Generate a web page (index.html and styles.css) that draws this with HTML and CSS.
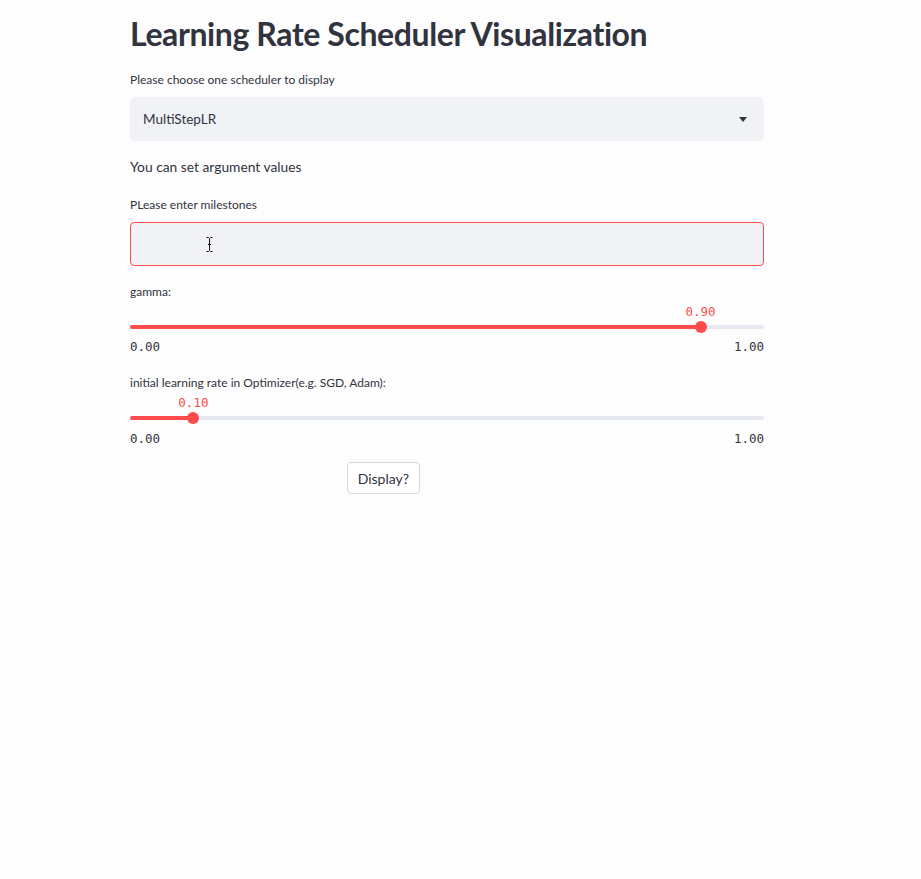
FILE: index.html
```html
<!DOCTYPE html>
<html lang="en">
<head>
<meta charset="utf-8">
<title>Learning Rate Scheduler Visualization</title>
<link rel="stylesheet" href="styles.css">
</head>
<body>
<main class="page">
  <h1 class="title">Learning Rate Scheduler Visualization</h1>

  <label class="label label-first">Please choose one scheduler to display</label>
  <div class="select">
    <span class="select-value">MultiStepLR</span>
    <svg class="caret" width="8" height="5" viewBox="0 0 8 5"><path d="M0 0H8L4 5Z" fill="#31333f"/></svg>
  </div>

  <p class="text">You can set argument values</p>

  <label class="label label-milestones">PLease enter milestones</label>
  <div class="input">
    <svg class="ibeam" width="7" height="15" viewBox="0 0 7 15"><path d="M0.5 0.5H2.5L3.5 1.5L4.5 0.5H6.5M3.5 1.5V13.5M0.5 14.5H2.5L3.5 13.5L4.5 14.5H6.5M2 7.5H5" stroke="#111" stroke-width="1" fill="none"/></svg>
  </div>

  <label class="label label-gamma">gamma:</label>
  <div class="slider">
    <div class="slider-value-row"><span class="slider-value" style="left:90%">0.90</span></div>
    <div class="slider-track">
      <div class="slider-fill" style="width:90%"></div>
      <div class="slider-thumb" style="left:90%"></div>
    </div>
    <div class="slider-range"><span>0.00</span><span>1.00</span></div>
  </div>

  <label class="label label-lr">initial learning rate in Optimizer(e.g. SGD, Adam):</label>
  <div class="slider">
    <div class="slider-value-row"><span class="slider-value" style="left:10%">0.10</span></div>
    <div class="slider-track">
      <div class="slider-fill" style="width:10%"></div>
      <div class="slider-thumb" style="left:10%"></div>
    </div>
    <div class="slider-range range-last"><span>0.00</span><span>1.00</span></div>
  </div>

  <div class="columns">
    <div class="col"></div>
    <div class="col"><button class="button">Display?</button></div>
    <div class="col"></div>
  </div>
</main>
</body>
</html>
```
FILE: styles.css
```css
* { box-sizing: border-box; }
html, body {
  margin: 0;
  padding: 0;
  background: #fdfdfd;
}
body {
  font-family: "Lato", "Noto Sans", sans-serif;
  color: #31333f;
  width: 921px;
  min-height: 879px;
}
.page {
  width: 634px;
  margin-left: 130px;
  padding-top: 14px;
  display: flex;
  flex-direction: column;
}
.title {
  margin: 0;
  font-size: 32px;
  line-height: 40px;
  font-weight: 700;
  letter-spacing: -0.4px;
  color: #31333f;
  white-space: nowrap;
}
.label {
  display: block;
  font-size: 12px;
  line-height: 16px;
  color: #31333f;
}
.label-first { margin-top: 18px; }
.select {
  margin-top: 9px;
  height: 44px;
  background: #f0f2f6;
  border-radius: 5px;
  display: flex;
  align-items: center;
  justify-content: space-between;
  padding: 0 17px 0 13px;
}
.select-value {
  font-size: 13.5px;
}
.caret { display: block; }
.text {
  margin: 16px 0 0;
  font-size: 13.8px;
  line-height: 20px;
}
.label-milestones { margin-top: 20px; }
.input {
  position: relative;
  margin-top: 9px;
  height: 44px;
  background: #f0f2f6;
  border: 1px solid #ff4b4b;
  border-radius: 4px;
}
.ibeam {
  position: absolute;
  left: 75px;
  top: 14px;
}
.label-gamma { margin-top: 18px; }
.label-lr { margin-top: 20px; }
.slider {
  margin-top: 4px;
}
.slider-value-row {
  position: relative;
  height: 16px;
}
.slider-value {
  position: absolute;
  top: 0;
  transform: translateX(-50%);
  font-family: "DejaVu Sans Mono", "Liberation Mono", monospace;
  font-size: 12.5px;
  line-height: 16px;
  color: #ff4b4b;
}
.slider-track {
  position: relative;
  height: 4px;
  margin-top: 5px;
  background: #e6e9ef;
  border-radius: 2px;
}
.slider-fill {
  height: 4px;
  background: #ff4b4b;
  border-radius: 2px;
}
.slider-thumb {
  position: absolute;
  top: -4px;
  width: 12px;
  height: 12px;
  margin-left: -6px;
  border-radius: 50%;
  background: #ff4b4b;
}
.slider-range {
  margin-top: 10px;
  display: flex;
  justify-content: space-between;
  font-family: "DejaVu Sans Mono", "Liberation Mono", monospace;
  font-size: 12.5px;
  line-height: 16px;
  color: #31333f;
}
.range-last { margin-top: 11px; }
.columns {
  margin-top: 15px;
  display: grid;
  grid-template-columns: 1fr 1fr 1fr;
  column-gap: 16px;
}
.button {
  height: 32px;
  padding: 0 10px;
  font-family: inherit;
  font-size: 14px;
  color: #31333f;
  background: #ffffff;
  border: 1px solid #d6d6d9;
  border-radius: 4px;
}
```
